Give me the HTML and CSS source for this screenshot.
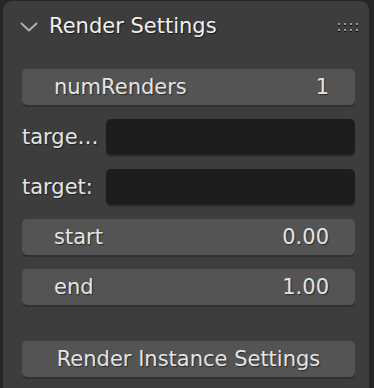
FILE: index.html
```html
<!DOCTYPE html>
<html lang="en">
<head>
  <meta charset="UTF-8">
  <title>Render Settings</title>
  <link rel="stylesheet" href="styles.css">
</head>
<body>
  <div class="panel">
    <div class="panel-header">
      <svg class="chevron" width="18" height="10" viewBox="0 0 18 10">
        <path d="M1 1 L9 8.5 L17 1" fill="none" stroke="#b4b4b4" stroke-width="1.8"/>
      </svg>
      <span class="panel-title">Render Settings</span>
      <div class="grip">
        <span></span><span></span><span></span><span></span>
        <span></span><span></span><span></span><span></span>
      </div>
    </div>
    <div class="panel-body">
      <div class="num-field">
        <span>numRenders</span>
        <span>1</span>
      </div>
      <div class="prop-row">
        <span class="prop-label">targe…</span>
        <div class="text-field"></div>
      </div>
      <div class="prop-row">
        <span class="prop-label">target:</span>
        <div class="text-field"></div>
      </div>
      <div class="num-field">
        <span>start</span>
        <span>0.00</span>
      </div>
      <div class="num-field">
        <span>end</span>
        <span>1.00</span>
      </div>
      <button class="op-button">Render Instance Settings</button>
    </div>
  </div>
</body>
</html>
```

FILE: styles.css
```css
body {
  margin: 0;
  height: 388px;
  overflow: hidden;
  background: #262626;
  font-family: 'DejaVu Sans', sans-serif;
  color: #e4e4e4;
}
.panel {
  margin: 1px 5px 0 3px;
  height: 400px;
  background: #3d3d3d;
  border-radius: 9px 9px 0 0;
}
.panel-header {
  display: flex;
  align-items: center;
  height: 50px;
  padding: 0 11px 0 17px;
}
.chevron {
  margin-right: 11px;
  margin-top: 2px;
}
.panel-title {
  flex: 1;
  font-size: 21px;
  color: #f0f0f0;
  text-shadow: 1px 1px 1px rgba(0, 0, 0, 0.6);
}
.grip {
  display: grid;
  grid-template-columns: repeat(4, 2px);
  gap: 4px 4px;
  margin-top: 1px;
}
.grip span {
  width: 2px;
  height: 2px;
  background: #9a9a9a;
  box-shadow: 0 1px 0 #0a0a0a;
}
.panel-body {
  display: flex;
  flex-direction: column;
  gap: 14px;
  padding: 18px 14px 0 19px;
}
.num-field {
  display: flex;
  justify-content: space-between;
  align-items: center;
  height: 36px;
  padding: 0 26px 0 32px;
  background: #545454;
  border-radius: 5px;
  box-shadow: 0 2px 0 #303030;
  font-size: 21px;
  text-shadow: 1px 1px 1px rgba(0, 0, 0, 0.5);
}
.prop-row {
  display: flex;
  align-items: center;
  height: 36px;
  gap: 6px;
}
.prop-label {
  width: 78px;
  font-size: 21px;
  white-space: nowrap;
  text-shadow: 1px 1px 1px rgba(0, 0, 0, 0.5);
}
.text-field {
  flex: 1;
  height: 36px;
  background: #1d1d1d;
  border-radius: 5px;
  box-shadow: 0 2px 0 #303030;
}
.op-button {
  margin-top: 22px;
  height: 36px;
  border: none;
  background: #545454;
  border-radius: 5px;
  box-shadow: 0 2px 0 #303030;
  font-family: 'DejaVu Sans', sans-serif;
  font-size: 21px;
  color: #e4e4e4;
  text-shadow: 1px 1px 1px rgba(0, 0, 0, 0.5);
}
```
